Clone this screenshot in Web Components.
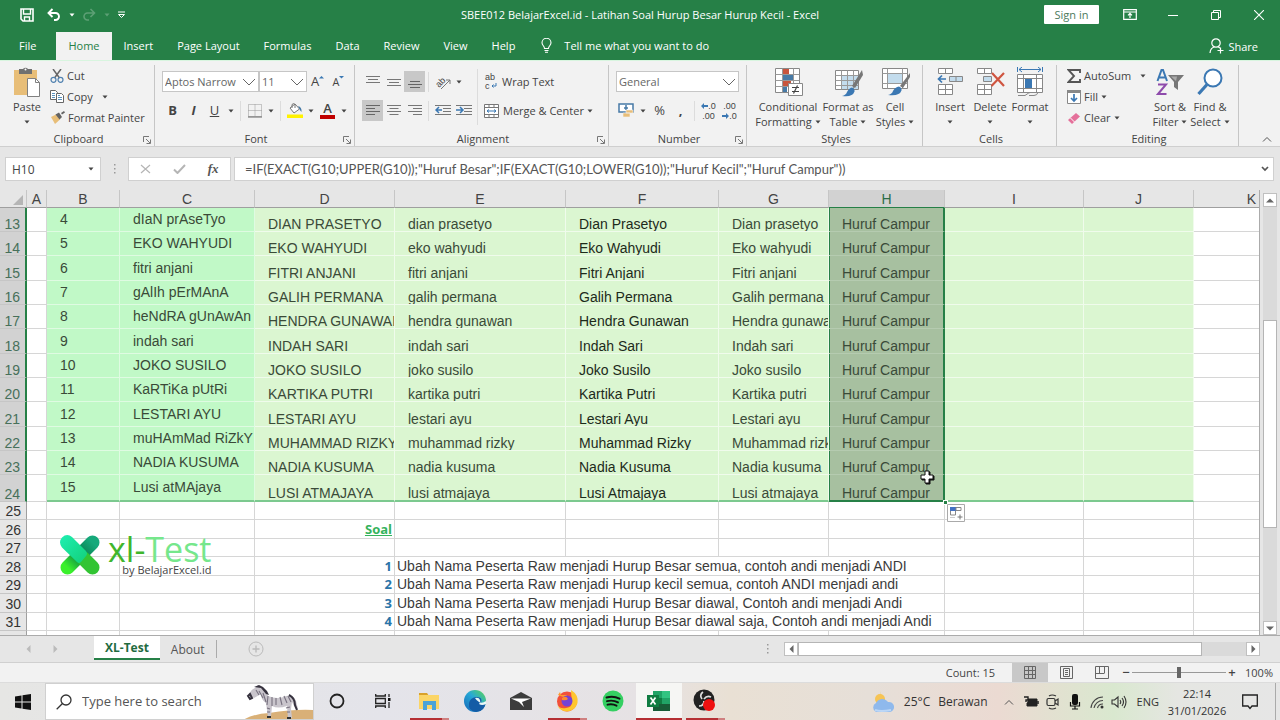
<!DOCTYPE html>
<html lang="en">
<head>
<meta charset="utf-8">
<title>SBEE012 BelajarExcel.id - Excel</title>
<style>
  html, body { height:100%; margin:0; }
  body {
    display:flex; flex-direction:column; overflow:hidden;
    font:11px/15px "Open Sans", "Noto Sans", sans-serif; color:#444; background:#e6e6e6;
  }
  sheet-grid { flex:1; min-height:0; }
</style>
</head>
<body>
  <title-bar></title-bar>
  <ribbon-tabs></ribbon-tabs>
  <ribbon-bar></ribbon-bar>
  <formula-bar></formula-bar>
  <sheet-grid></sheet-grid>
  <sheet-tabs></sheet-tabs>
  <status-bar></status-bar>
  <task-bar></task-bar>

<script>
// [width, height, content]
const ICONS = {
  save: [14, 14, '<path d="M1 1h12v12H3l-2-2z" fill="none" stroke="#fff" stroke-width="1.6"/><path d="M3.500 1v5h7V1M4.500 13V9h5v4" fill="none" stroke="#fff" stroke-width="1.400"/>'],
  undo: [14, 13, '<path d="M5.500 1 1.500 5l4 4M2 5h6.500a3.500 3.500 0 0 1 0 7H7" fill="none" stroke="#fff" stroke-width="1.900"/>'],
  redo: [14, 13, '<path d="M8.500 1l4 4-4 4M12 5H5.500a3.500 3.500 0 0 0 0 7H7" fill="none" stroke="#5d9f75" stroke-width="1.600"/>'],
  customize: [9, 8, '<path d="M1 1h7" stroke="#fff"/><path d="M1.500 3.500h6l-3 3z" fill="none" stroke="#fff"/>'],
  caret: [6, 4, '<path d="M.5.500h5L3 3.500z" fill="currentColor"/>'],
  chevron: [14, 8, '<path d="M1 1l6 6 6-6" fill="none" stroke="#666"/>'],
  display: [14, 11, '<path d="M.7.700h12.600v9.600H.7zM.7 3h12.600M7 9V4.500M5 6.300l2-2 2 2" fill="none" stroke="#fff" stroke-width="1.200"/>'],
  minimize: [10, 10, '<path d="M0 5.500h10" stroke="#fff"/>'],
  restore: [10, 10, '<path d="M.5 2.500h7v7h-7zM2.500 2.500v-2h7v7h-2" fill="none" stroke="#fff"/>'],
  close: [10, 10, '<path d="M0 0l10 10M10 0L0 10" stroke="#fff" stroke-width="1.100"/>'],
  bulb: [11, 15, '<path d="M3.500 10.500C3.500 8 1 7.500 1 4.800a4.500 4.500 0 0 1 9 0c0 2.700-2.500 3.200-2.500 5.700zM3.500 12.500h4M4 14.300h3" fill="none" stroke="#fff" stroke-width="1.100"/>'],
  person: [15, 16, '<circle cx="7" cy="5" r="4.200" fill="none" stroke="#fff" stroke-width="1.200"/><path d="M1 15c.3-3.500 2-5.500 4.500-6M9 8.800l2 1.200M11.500 9.500v6M8.500 12.500h6" fill="none" stroke="#fff" stroke-width="1.200"/>'],
  paste: [28, 30, '<path d="M1 3h23v25H1z" fill="#e8be78"/><path d="M6 2h4a3 3 0 0 1 5 0h4v5H6z" fill="#707070"/><circle cx="12.500" cy="2.500" r="1" fill="#fff"/><path d="M14.500 11.500h8l4 4v14h-12z" fill="#fff" stroke="#808080"/><path d="M22.500 11.500v4h4" fill="none" stroke="#808080"/>'],
  cut: [14, 14, '<path d="M3 0l6.500 9M11 0L4.500 9" stroke="#666" stroke-width="1.500"/><circle cx="3.500" cy="10.800" r="2.500" fill="none" stroke="#5182b0" stroke-width="1.200"/><circle cx="10.500" cy="10.800" r="2.500" fill="none" stroke="#5182b0" stroke-width="1.200"/>'],
  copy: [14, 13, '<path d="M.5.500h5l2 2v7h-7z" fill="#fff" stroke="#666"/><path d="M6.500 3.500h5l2 2v7h-7z" fill="#fff" stroke="#666"/><path d="M2 3.500h3M2 5.500h3M2 7.500h3M8 7.500h4M8 9.500h4M8 5.500h2" stroke="#5b93bf"/>'],
  painter: [15, 13, '<path d="M1 6l5-2.500 4 5L5 13z" fill="#e8be78"/><path d="M5.500 3.500L9 1.500l3 4.500-2.500 2.500zM11 2l3-2 1 1.500-3 2z" fill="#636363"/>'],
  launcher: [8, 8, '<path d="M.5 6V.500H6M3 3l4 4M7.500 3.500v4h-4" fill="none" stroke="#777"/>'],
  border: [14, 14, '<path d="M.5.500h13v12H.5zM7 .5v12M.5 6.500h13" fill="none" stroke="#999" stroke-dasharray="1 1"/><path d="M0 13h14" stroke="#666"/>'],
  bucket: [16, 15, '<path d="M3 5l5-4 4.500 5L7 10z" fill="#fff" stroke="#777"/><path d="M5 5V1.500q2-2 3 0V5" fill="none" stroke="#777"/><path d="M11 3q4 1 3.500 6-2-2-2.500-4" fill="#477aa6"/><path d="M0 11.500h16v3.500H0z" fill="#fff200"/>'],
  top: [14, 12, '<path d="M0 .5h14M2 3.500h10M0 6.500h14" stroke="#777"/>'],
  middle: [14, 12, '<path d="M0 3.500h14M2 6.500h10M0 9.500h14" stroke="#777"/>'],
  bottom: [14, 12, '<path d="M2 5.500h10M0 8.500h14M2 11.500h10" stroke="#666"/>'],
  left: [14, 12, '<path d="M0 .5h14M0 3.500h9M0 6.500h14M0 9.500h9" stroke="#666"/>'],
  center: [14, 12, '<path d="M0 .5h14M2.500 3.500h9M0 6.500h14M2.500 9.500h9" stroke="#777"/>'],
  right: [14, 12, '<path d="M0 .5h14M5 3.500h9M0 6.500h14M5 9.500h9" stroke="#777"/>'],
  outdent: [16, 12, '<path d="M0 .5h16M8 3.500h8M8 6.500h8M0 9.500h16" stroke="#777"/><path d="M4 2L1 5l3 3M1 5h6" fill="none" stroke="#3b78b3" stroke-width="1.500"/>'],
  indent: [16, 12, '<path d="M0 .5h16M8 3.500h8M8 6.500h8M0 9.500h16" stroke="#777"/><path d="M4 2l3 3-3 3M0 5h6" fill="none" stroke="#3b78b3" stroke-width="1.500"/>'],
  merge: [15, 14, '<path d="M.5.500h14v13H.5zM.5 3.500h14M.5 10.500h14M5 .5v3M10 .5v3M5 10.500v3M10 10.500v3" fill="#fff" stroke="#777"/><path d="M3 7h9M5 5.500L3 7l2 1.500M10 5.500L12 7l-2 1.500" fill="none" stroke="#3b78b3"/>'],
  money: [17, 15, '<path d="M1 1h14v8H1z" fill="#fff" stroke="#477aa6" stroke-width="1.500"/><path d="M8 2v5M6 5h4" stroke="#477aa6" stroke-width="1.500"/><path d="M8 7h7v3H8zM5 10h7v4H5z" fill="#e8be78" stroke="#f2f2f2" stroke-width=".6"/>'],
  arrowleft: [7, 6, '<path d="M3 0L0 3l3 3V4h4V2H3z" fill="#3b78b3"/>'],
  arrowright: [7, 6, '<path d="M4 0l3 3-3 3V4H0V2h4z" fill="#3b78b3"/>'],
  conditional: [29, 30, '<path d="M1.500 1.500h24v24h-24z" fill="#fff" stroke="#888"/><path d="M9 2h6v5H9zM9 14h8v5H9z" fill="#c8553d"/><path d="M9 8h10v5H9zM9 20h4v5H9z" fill="#477aa6"/><path d="M1.500 7.500h24M1.500 13.500h24M1.500 19.500h24M8.500 1.500v24M19.500 1.500v24" fill="none" stroke="#999"/><path d="M14.500 16.500h14v12h-14z" fill="#fff" stroke="#888"/><path d="M18 20.500h7M18 24.500h7M23.500 18.500l-4 8" stroke="#444" stroke-width="1.200"/>'],
  tablestyle: [29, 30, '<path d="M1.500 3.500h23v19h-23z" fill="#fff" stroke="#888"/><path d="M8 9h16v13H8z" fill="#c3dced"/><path d="M1.500 8.500h23M1.500 13.500h23M1.500 18.500h23M7.500 3.500v19M13.500 3.500v19M19.500 3.500v19" stroke="#999"/><path d="M28 3L18 19l3 2 8-13z" fill="#777"/><path d="M8 29q4-1 5-4 2-4 5-4.500 3 1 2.500 4-2 6-12.500 4.500z" fill="#3b78b3"/>'],
  cellstyle: [29, 30, '<path d="M1.500 1.500h25v20h-25z" fill="#fff" stroke="#888"/><path d="M1.500 6.500h25M1.500 16.500h25M6.500 1.500v20M21.500 1.500v20" stroke="#999"/><path d="M7 7h14v9H7z" fill="#c3dced"/><path d="M29 6L19 19l3 2 7-11z" fill="#777"/><path d="M7 28q4-1 5-4 2-4 6-4.500 3 1 2.500 4-2 6-13.500 4.500z" fill="#3b78b3"/>'],
  insert: [27, 30, '<path d="M1.500 1.500h14v5h-14zM8.500 1.500v5M1.500 17.500h14v10h-14zM8.500 17.500v10M1.500 22.500h14" fill="#fff" stroke="#888"/><path d="M12.500 9.500h13v5h-13zM19 9.500v5" fill="#c3dced" stroke="#888"/><path d="M5 8.500L1.500 12 5 15.500M2 12h7" fill="none" stroke="#3b78b3" stroke-width="1.700"/>'],
  delete: [29, 30, '<path d="M1.500 1.500h14v5h-14zM8.500 1.500v5M1.500 17.500h14v10h-14zM8.500 17.500v10M1.500 22.500h14" fill="#fff" stroke="#888"/><path d="M7.500 9.500h8v5h-8z" fill="#c3dced" stroke="#888"/><path d="M16 6l12 13M28 6L15.500 19" stroke="#cf5540" stroke-width="2.200"/>'],
  format: [28, 30, '<path d="M3 2.500h22M6 0L3 2.500 6 5M22 0l3 2.500L22 5M1.500 0v5M26.500 0v5" fill="none" stroke="#3b78b3"/><path d="M1.500 7.500h25v18h-25zM1.500 11.500h25M1.500 21.500h25M7.500 7.500v18M20.500 7.500v18" fill="#fff" stroke="#888"/><path d="M9 12h7v9H9z" fill="#3b78b3"/><path d="M2 28.500h7q4-3 5-3M13 28.500h5q3 0 4-3" fill="none" stroke="#888"/>'],
  sigma: [14, 14, '<path d="M13 4V1H1.500L7 7l-5.500 6H13v-3" fill="none" stroke="#555" stroke-width="1.900"/>'],
  fill: [14, 14, '<path d="M.5.500h13v13H.5z" fill="#fff" stroke="#888"/><path d="M0 0h14v3H0z" fill="#888"/><path d="M7 4v7M4 8l3 3 3-3" fill="none" stroke="#3b78b3" stroke-width="1.700"/>'],
  eraser: [14, 14, '<path d="M1 9l8-7 4 3.500L5 13z" fill="#e4709a"/><path d="M3.500 7l4 4" stroke="#fff"/>'],
  sort: [28, 30, '<path d="M1.500 14L5.500 3h1.500l4 11M3 10.500h6.500" fill="none" stroke="#3b78b3" stroke-width="2"/><path d="M2 17.500h8L2 27h8.500" fill="none" stroke="#8e4bab" stroke-width="2"/><path d="M12 8h16l-6 7v8l-4-3v-5z" fill="#777"/><path d="M15 9.500h6L20 14z" fill="#aaa"/>'],
  find: [28, 30, '<circle cx="17" cy="11" r="8.500" fill="#fff" stroke="#3b78b3" stroke-width="2"/><path d="M11 17.500L2.500 27" stroke="#3b78b3" stroke-width="3.200"/>'],
  collapse: [10, 6, '<path d="M1 5.500L5 1.500l4 4" fill="none" stroke="#555"/>'],
  cancel: [11, 10, '<path d="M1 1l9 8M10 1L1 9" stroke="#b5b5b5" stroke-width="1.200"/>'],
  accept: [13, 10, '<path d="M1 5.500l3.500 3.500L12 1" fill="none" stroke="#b5b5b5" stroke-width="2"/>'],
  dots: [3, 12, '<path d="M1 1h1.500v1.500H1zM1 5h1.500v1.500H1zM1 9h1.500v1.500H1z" fill="#999"/>'],
  expand: [8, 6, '<path d="M1 1l3 3 3-3" fill="none" stroke="#555" stroke-width="1.700"/>'],
  plus: [16, 16, '<circle cx="8" cy="8" r="7" fill="none" stroke="#bbb"/><path d="M8 4.500v7M4.500 8h7" stroke="#bbb" stroke-width="1.400"/>'],
  prev: [5, 8, '<path d="M4.500 0v8L.5 4z" fill="currentColor"/>'],
  next: [5, 8, '<path d="M.5 0v8l4-4z" fill="currentColor"/>'],
  up: [8, 5, '<path d="M0 4.500h8L4 .5z" fill="currentColor"/>'],
  down: [8, 5, '<path d="M0 .5h8l-4 4z" fill="currentColor"/>'],
  normal: [14, 13, '<path d="M1.500.500h11v12h-11zM1.500 4.500h11M1.500 8.500h11M5.500.500v12M9.500.500v12" fill="none" stroke="#666"/>'],
  pagelayout: [13, 13, '<path d="M.5.500h12v12H.5zM3.500 2.500h6v8h-6zM5 4.500h3M5 6.500h3M5 8.500h3" fill="none" stroke="#666"/>'],
  pagebreak: [14, 13, '<path d="M.5 12.500V.500h13v12h-13M4.500 0v7M9.500 0v7M0 7.500h9.500" fill="none" stroke="#666"/>'],
  logo: [42, 42, '<defs><linearGradient id="a" x1="0" y1="0" x2="1" y2="1"><stop stop-color="#1fefb2"/><stop offset="1" stop-color="#12cf79"/></linearGradient><linearGradient id="b" x1="1" y1="0" x2="0" y2="1"><stop stop-color="#16a97b"/><stop offset=".5" stop-color="#087c4b"/><stop offset="1" stop-color="#3af02c"/></linearGradient></defs><path d="M33.500 8.500l-25 25" stroke="url(#b)" stroke-width="14" stroke-linecap="round"/><path d="M24 24l9.500 9.500" stroke="#32c433" stroke-width="14" stroke-linecap="round"/><path d="M3 3.500Q8-1 13 3l14 14q2 3 0 5l-5 6q-2 2-4 0L3 13.500Q-1 8 3 3.500z" fill="url(#a)"/>'],
  fillopts: [18, 18, '<path d="M.5.500h17v17H.5z" fill="#fff" stroke="#aaa"/><path d="M3 3h6v4H3z" fill="#4472c4"/><path d="M9 3.500h5v3H9zM3.500 7v4h5V7" fill="none" stroke="#888"/><path d="M13 10.500v5M10.500 13h5" stroke="#777"/><path d="M3 13.500h5" stroke="#ccc"/>'],
  cursor: [15, 15, '<path d="M6 2h4v4h4v4h-4v4H6v-4H2V6h4z" fill="#111" stroke="#111"/><path d="M5 1h4v4h4v4H9v4H5V9H1V5h4z" fill="#fff" stroke="#111"/>'],
  windows: [16, 16, '<path d="M0 2.500l6.500-1V7.500H0zM7.500 1.300L16 0v7.500H7.500zM0 8.500h6.500v6L0 13.500zM7.500 8.500H16V16l-8.500-1.300z" fill="#111"/>'],
  search: [16, 16, '<circle cx="10" cy="6" r="5" fill="none" stroke="#333" stroke-width="1.300"/><path d="M6.500 9.500L.7 15.300" stroke="#333" stroke-width="1.300"/>'],
  zebra: [70, 36, '<path d="M0 36q10-6 26-7 26-4 44-3v10z" fill="#d9b077"/><path d="M6 12q1-6 6-8l3-3 2 2q6 2 8 9 10 4 18 0 8-1 10 5l2 8-2 1-4-8-1 7 1 9h-4l-1-12q-9 3-15 0l-1 11h-3l-2-14q-5-3-5-9l-7 4z" fill="#c9c5cc"/><path d="M11 3l5-2 4 2 4 4 2 4-3-1-5-6z" fill="#36323e"/><path d="M5 12l2-2 2 4-2 1zM46 11q6 3 6 10l2 5" fill="none" stroke="#36323e" stroke-width="2"/><path d="M13 6l3 5M16 7l4 7M20 9l3 9M25 12l-1 9M29 13v9M33 14v7M37 13l2 8M41 12l3 7M45 12l3 6M24 24l3 1M24 28h3M43 24l4-1M44 28h3" stroke="#77717f" stroke-width="1.100"/><path d="M24 33h4M44 34h4" stroke="#333" stroke-width="2"/>'],
  cortana: [16, 16, '<circle cx="8" cy="8" r="6.500" fill="none" stroke="#222" stroke-width="1.800"/>'],
  taskview: [16, 14, '<path d="M.7 0v2h9.600V0M.7 14v-2h9.600v2M.7 4.500h9.600v5H.7zM14 0v3M14 8v6" fill="none" stroke="#222" stroke-width="1.300"/><path d="M13 4h2.500v3H13z" fill="#111"/>'],
  folder: [22, 20, '<path d="M1 2h8l2 3H1z" fill="#d9a12b"/><path d="M1 4h20v14H1z" fill="#fbd567"/><path d="M5 10h13v9h-4v-5H9v5H5z" fill="#4ba3d8"/>'],
  edge: [24, 24, '<defs><linearGradient id="e" x1="0" y1="1" x2="1" y2="0"><stop stop-color="#1565b8"/><stop offset=".55" stop-color="#27a9d6"/><stop offset="1" stop-color="#5fd64c"/></linearGradient></defs><circle cx="12" cy="12" r="11" fill="url(#e)"/><path d="M10 12q0-4 4-4 6 0 4 6 3 1 5-2-1 11-10 11Q5 22 6 14q1-5 7-6-3 2-3 4z" fill="#145ca6"/><path d="M12 9q4-1 5 2 1 2-1 4 3 2 7 0v-3q-4 3-7 1-3-2-4-4z" fill="#e9f7f7"/>'],
  mail: [24, 20, '<path d="M1 7l11-6 11 6v12H1z" fill="#3c3c3c"/><path d="M2 7.500h20L13 11l2 5-5-5z" fill="#fff"/>'],
  firefox: [24, 24, '<circle cx="12" cy="12.500" r="10" fill="#f2503a"/><path d="M16 1q8 5 6.500 13Q20 22 12 22.500 5 22 2 16q3 4 9 3 7-1 6-8-1-5-1-10z" fill="#ffc52e"/><path d="M3 6l2-3 1 3h6l-1 3z" fill="#ff9a2e"/><circle cx="12" cy="12" r="5.500" fill="#7542d5"/><path d="M7 9q4-3 6 1-2 2-6 1z" fill="#ff8a2e"/>'],
  spotify: [22, 22, '<circle cx="11" cy="11" r="10.500" fill="#35cf62"/><path d="M4.500 7.500q7-2 13 1.200M5 11.200q6-1.500 11 1.200M5.500 14.700q5-1.200 9 1" fill="none" stroke="#111" stroke-width="1.900" stroke-linecap="round"/>'],
  excel: [24, 22, '<path d="M6 1h17v20H6z" fill="#21a366"/><path d="M15 1h8v7h-8z" fill="#33c481"/><path d="M6 8h9v6H6z" fill="#107c41"/><path d="M6 14h17v7H6z" fill="#185c37"/><path d="M15 8h8v6h-8z" fill="#21a366"/><path d="M0 5h12v12H0z" fill="#107c41"/><path d="M3.500 7.500l5 7M8.500 7.500l-5 7" stroke="#fff" stroke-width="1.700"/>'],
  obs: [24, 24, '<circle cx="11" cy="11" r="10.500" fill="#222"/><path d="M10 3q-4 3-1 7M18 8q-4-2-7 2M6 17q5 0 5-5" fill="none" stroke="#ddd" stroke-width="1.700"/><circle cx="16" cy="16" r="6" fill="#ef1010"/>'],
  weather: [26, 24, '<path d="M10 1q0 6 5 8-3 5-9 3 5-4 4-11z" fill="#f6b52e"/><circle cx="10" cy="9" r="5" fill="#f6c455"/><path d="M6 22a5 5 0 0 1 0-9 7 7 0 0 1 12-1 5 5 0 0 1 2 10z" fill="#8fb9ec"/><path d="M5 20q6 2 16 0" stroke="#bcd7f6" stroke-width="2" fill="none"/>'],
  battery: [16, 12, '<path d="M5 3h9v7H4V7" fill="#222" stroke="#222"/><path d="M15 5v3" stroke="#222" stroke-width="1.500"/><path d="M1 1h4v3H3v2" fill="none" stroke="#222" stroke-width="1.400"/>'],
  meet: [14, 16, '<rect x="1" y="4.500" width="8" height="7" rx="1.500" fill="none" stroke="#333" stroke-width="1.200"/><path d="M9 7l3-2v6l-3-2M3 2q3-2 7 0M3 14q3 2 7 0" fill="none" stroke="#333" stroke-width="1.200"/>'],
  mic: [12, 16, '<rect x="3" y="0" width="6" height="11" rx="2" fill="#111"/><path d="M1.500 8v4h9V8M6 12v3M3 15h6" fill="none" stroke="#111" stroke-width="1.200"/>'],
  wifi: [14, 14, '<path d="M1 13A12 12 0 0 1 13 2M4 13a9 9 0 0 1 9-7.500M7.500 13A5.500 5.500 0 0 1 13 9" fill="none" stroke="#444" stroke-width="1.100"/><circle cx="12" cy="12" r="1.500" fill="#333"/>'],
  sound: [16, 14, '<path d="M1 5h2.500L7 2v10L3.500 9H1zM9 5q1.500 2 0 4M11 3q3 4 0 8M13 1q4 6 0 12" fill="none" stroke="#333" stroke-width="1.100"/>'],
  notice: [16, 16, '<path d="M.7 1h14.600v11H10l-2 2.500L6 12H.7z" fill="none" stroke="#222" stroke-width="1.300"/>']
};

const icon = name => {
  const [w, h, body] = ICONS[name];
  return `<svg width="${w}" height="${h}" viewBox="0 0 ${w} ${h}" aria-hidden="true">${body}</svg>`;
};

const BASE = `
  :host, *{ box-sizing:border-box; }
  svg{ display:block; flex:none; }
  button, input, select{
    font:inherit; color:inherit; margin:0; padding:0; border:0; background:none; border-radius:0;
  }
  button{ display:flex; align-items:center; justify-content:center; white-space:nowrap; }
`;

function define(tag, render, ready) {
  customElements.define(tag, class extends HTMLElement {
    constructor() {
      super();
      this.attachShadow({ mode: 'open' });
    }
    connectedCallback() {
      this.shadowRoot.innerHTML = `<style>${BASE}</style>` + render(this);
      if (ready) ready(this.shadowRoot);
    }
  });
}

define('title-bar', () => `
  <style>
    :host{ display:grid; grid-template-columns:1fr auto 1fr; align-items:center; height:32px; padding-bottom:3px; background:#268047; color:#fff; }
    .quick{ display:flex; align-items:center; padding-left:20px; gap:7px; }
    .quick button{ height:20px; gap:8px; }
    .quick .redo{ color:#5d9f75; }
    .quick .save{ margin-right:6px; }
    .window{ display:flex; justify-content:flex-end; align-items:center; }
    .window button{ width:43px; height:20px; }
    .window .sign{ width:55px; height:19px; background:#fff; color:#4c7a5d; margin-right:9px; border-radius:1px; }
  </style>
  <div class="quick">
    <button class="save" aria-label="Save">${icon('save')}</button>
    <button aria-label="Undo">${icon('undo')}${icon('caret')}</button>
    <button class="redo" aria-label="Redo">${icon('redo')}${icon('caret')}</button>
    <button aria-label="Customize Quick Access Toolbar">${icon('customize')}</button>
  </div>
  <div>SBEE012 BelajarExcel.id - Latihan Soal Hurup Besar Hurup Kecil - Excel</div>
  <div class="window">
    <button class="sign">Sign in</button>
    <button aria-label="Ribbon display options">${icon('display')}</button>
    <button aria-label="Minimize">${icon('minimize')}</button>
    <button aria-label="Restore">${icon('restore')}</button>
    <button aria-label="Close">${icon('close')}</button>
  </div>
`);

define('ribbon-tabs', () => `
  <style>
    :host{ display:flex; height:28px; background:#268047; color:#fff; padding:0 22px 0 7px; }
    button{ padding:0 12px 1px; }
    .file{ margin-right:8px; }
    .on{ background:#f2f2f2; color:#268047; }
    .tell{ gap:12px; padding-left:14px; }
    .share{ margin-left:auto; gap:4px; padding:0; }
  </style>
  <button class="file">File</button>
  <button class="on">Home</button>
  ${['Insert', 'Page Layout', 'Formulas', 'Data', 'Review', 'View', 'Help'].map(t => `<button>${t}</button>`).join('')}
  <button class="tell">${icon('bulb')}Tell me what you want to do</button>
  <button class="share">${icon('person')}Share</button>
`);

define('ribbon-group', el => `
  <style>
    :host{ display:flex; flex-direction:column; border-right:1px solid #c6c6c6; margin-top:4px; padding:0 4px 0 7px; }
    .body{ display:flex; height:64px; }
    footer{ position:relative; margin-top:3px; line-height:14px; text-align:center; }
    footer button{ position:absolute; right:-1px; top:4px; }
  </style>
  <div class="body"><slot></slot></div>
  <footer>${el.getAttribute('label')}${el.hasAttribute('launcher') ? `<button aria-label="${el.getAttribute('label')} settings">${icon('launcher')}</button>` : ''}</footer>
`);

// Tall button: picture over one or two lines of text.
define('big-button', el => {
  const second = el.getAttribute('second');
  return `
  <style>
    :host{ display:block; }
    button{ flex-direction:column; width:100%; justify-content:flex-start; }
    .pic{ display:flex; align-items:center; height:34px; }
    .line{ display:flex; align-items:center; justify-content:center; height:15px; gap:3px; }
  </style>
  <button>
    <span class="pic">${icon(el.getAttribute('icon'))}</span>
    <span class="line"><slot></slot></span>
    <span class="line">${second ? `<span>${second}</span>` : ''}${icon('caret')}</span>
  </button>`;
});

define('small-button', el => `
  <style>
    :host{ display:block; }
    button{ height:21px; gap:3px; }
    .menu{ margin-left:var(--menu-gap, 0); }
  </style>
  <button>${icon(el.getAttribute('icon'))}<slot></slot>${el.hasAttribute('menu') ? `<span class="menu">${icon('caret')}</span>` : ''}</button>
`);

define('combo-box', el => `
  <style>
    :host{ display:grid; align-items:center; background:#fff; border:1px solid #c6c6c6; height:21px; }
    select{ grid-area:1/1; appearance:none; width:100%; padding-left:2px; color:#666; }
    svg{ grid-area:1/1; justify-self:end; margin-right:2px; pointer-events:none; }
  </style>
  <select aria-label="${el.getAttribute('label')}"><option>${el.getAttribute('value')}</option></select>${icon('chevron')}
`);

define('ribbon-bar', () => `
  <style>
    :host{ display:flex; background:#f2f2f2; border-top:1px solid #d8f5df; border-bottom:1px solid #cfcfcf; height:87px; }
    .clip{ flex:0 1 155px; } .font{ flex:0 1 200px; } .align{ flex:0 1 254px; }
    .num{ flex:0 1 138px; } .styles{ flex:0 1 176px; } .cells{ flex:0 1 134px; } .edit{ flex:0 1 182px; }
    .stack{ display:flex; flex-direction:column; }
    .clip .stack{ padding-left:3px; }
    .rows{ display:flex; flex-direction:column; gap:8px; padding-top:6px; }
    .row{ display:flex; align-items:center; height:21px; }
    .t{ width:21px; height:21px; font-size:13px; }
    .c{ width:12px; height:21px; }
    .on{ background:#c8c8c8; }
    .sep{ width:1px; height:20px; margin:0 3px; background:#dcdcdc; }
    .tall{ width:1px; margin:4px 3px 0; background:#dcdcdc; height:56px; }
    .wide{ gap:4px; padding-left:3px; height:21px; }
    .tile{ width:40px; }
    .name{ width:97px; } .size{ width:48px; }
    .fmt{ width:123px; }
    .color{ flex-direction:column; font-weight:600; line-height:13px; }
    .color::after{ content:""; width:15px; height:4px; background:#c00000; }
    .tiny{ flex-direction:column; font:9px/10px "Liberation Sans", sans-serif; }
    .tiny span{ display:flex; align-items:center; }
    text{ font:9px "Liberation Sans", sans-serif; fill:#444; }
    .collapse{ margin:auto 8px 4px auto; }
    .auto{ --menu-gap:6px; }
  </style>
  <ribbon-group class="clip" label="Clipboard" launcher>
    <big-button class="tile" icon="paste">Paste</big-button>
    <div class="stack">
      <small-button icon="cut">Cut</small-button>
      <small-button icon="copy" class="auto" menu>Copy</small-button>
      <small-button icon="painter">Format Painter</small-button>
    </div>
  </ribbon-group>
  <ribbon-group class="font" label="Font" launcher>
    <div class="rows">
      <div class="row">
        <combo-box class="name" label="Font" value="Aptos Narrow"></combo-box>
        <combo-box class="size" label="Font size" value="11"></combo-box>
        <button class="t" aria-label="Increase font size">A<svg width="5" height="14"><path d="M0 3.500L2.500 1 5 3.500z" fill="#3b78b3"/></svg></button>
        <button class="t" aria-label="Decrease font size"><small>A</small><svg width="5" height="14"><path d="M0 1h5L2.500 3.500z" fill="#3b78b3"/></svg></button>
      </div>
      <div class="row">
        <button class="t"><b>B</b></button>
        <button class="t"><i><b>I</b></i></button>
        <button class="t"><u>U</u></button>
        <button class="c" aria-label="Underline options">${icon('caret')}</button>
        <span class="sep"></span>
        <button class="t" aria-label="Borders">${icon('border')}</button>
        <button class="c" aria-label="Border options">${icon('caret')}</button>
        <span class="sep"></span>
        <button class="t" aria-label="Fill color">${icon('bucket')}</button>
        <button class="c" aria-label="Fill color options">${icon('caret')}</button>
        <button class="t color" aria-label="Font color">A</button>
        <button class="c" aria-label="Font color options">${icon('caret')}</button>
      </div>
    </div>
  </ribbon-group>
  <ribbon-group class="align" label="Alignment" launcher>
    <div class="rows">
      <div class="row">
        <button class="t" aria-label="Top align">${icon('top')}</button>
        <button class="t" aria-label="Middle align">${icon('middle')}</button>
        <button class="t on" aria-label="Bottom align">${icon('bottom')}</button>
        <span class="sep"></span>
        <button class="t" aria-label="Orientation"><svg width="18" height="18" viewBox="0 0 18 18"><text x="2" y="12" transform="rotate(-45 7 10)">ab</text><path d="M7 16l9-9M16 11V7h-4" fill="none" stroke="#777"/></svg></button>
        <button class="c" aria-label="Orientation options">${icon('caret')}</button>
      </div>
      <div class="row">
        <button class="t on" aria-label="Align left">${icon('left')}</button>
        <button class="t" aria-label="Center">${icon('center')}</button>
        <button class="t" aria-label="Align right">${icon('right')}</button>
        <span class="sep"></span>
        <button class="t" aria-label="Decrease indent">${icon('outdent')}</button>
        <button class="t" aria-label="Increase indent">${icon('indent')}</button>
      </div>
    </div>
    <span class="tall"></span>
    <div class="rows">
      <div class="row"><button class="wide"><svg width="14" height="21" viewBox="0 0 14 21"><text x="1" y="9">ab</text><text x="1" y="18">c</text><path d="M12 12v3H8M9.500 13.500L8 15l1.500 1.500" fill="none" stroke="#3b78b3"/></svg>Wrap Text</button></div>
      <div class="row"><button class="wide">${icon('merge')}Merge &amp; Center</button><button class="c" aria-label="Merge options">${icon('caret')}</button></div>
    </div>
  </ribbon-group>
  <ribbon-group class="num" label="Number" launcher>
    <div class="rows">
      <combo-box class="fmt" label="Number format" value="General"></combo-box>
      <div class="row">
        <button class="t" aria-label="Accounting format">${icon('money')}</button>
        <button class="c" aria-label="Accounting options">${icon('caret')}</button>
        <button class="t">%</button>
        <button class="t"><b>,</b></button>
        <span class="sep"></span>
        <button class="t tiny" aria-label="Increase decimal"><span>${icon('arrowleft')}.0</span><span>.00</span></button>
        <button class="t tiny" aria-label="Decrease decimal"><span>.00</span><span>${icon('arrowright')}.0</span></button>
      </div>
    </div>
  </ribbon-group>
  <ribbon-group class="styles" label="Styles">
    <big-button style="width:68px" icon="conditional" second="Formatting">Conditional</big-button>
    <big-button style="width:52px" icon="tablestyle" second="Table">Format as</big-button>
    <big-button style="width:42px" icon="cellstyle" second="Styles">Cell</big-button>
  </ribbon-group>
  <ribbon-group class="cells" label="Cells">
    <big-button class="tile" icon="insert">Insert</big-button>
    <big-button class="tile" icon="delete">Delete</big-button>
    <big-button class="tile" icon="format">Format</big-button>
  </ribbon-group>
  <ribbon-group class="edit" label="Editing">
    <div class="stack" style="width:86px; padding-left:3px">
      <small-button class="auto" icon="sigma" menu>AutoSum</small-button>
      <small-button icon="fill" menu>Fill</small-button>
      <small-button icon="eraser" menu>Clear</small-button>
    </div>
    <big-button class="tile" icon="sort" second="Filter">Sort &amp;</big-button>
    <big-button class="tile" icon="find" second="Select">Find &amp;</big-button>
  </ribbon-group>
  <button class="collapse" aria-label="Collapse the ribbon">${icon('collapse')}</button>
`);

define('formula-bar', () => `
  <style>
    :host{ display:flex; align-items:center; padding:10px 6px 9px 5px; font-size:12px; }
    .box{ display:flex; align-items:center; height:24px; background:#fff; border:1px solid #d0d0d0; }
    .name{ width:96px; padding-right:6px; }
    input{ flex:1; min-width:0; height:20px; outline:0; }
    .name input{ padding-left:6px; }
    .dots{ margin:0 12px; }
    .tools{ width:103px; }
    .tools button{ flex:1; height:22px; }
    .formula{ flex:1; margin-left:3px; color:#555; }
    .formula input{ padding-left:10px; font:13px Lato, "Open Sans", sans-serif; }
    .formula button{ width:16px; }
    .fx{ font:italic bold 13px "Liberation Serif", serif; color:#555; }
  </style>
  <div class="box name"><input aria-label="Name box" value="H10">${icon('caret')}</div>
  <span class="dots">${icon('dots')}</span>
  <div class="box tools">
    <button aria-label="Cancel">${icon('cancel')}</button>
    <button aria-label="Enter">${icon('accept')}</button>
    <button class="fx">fx</button>
  </div>
  <div class="box formula">
    <input aria-label="Formula" id="f">
    <button aria-label="Expand formula bar">${icon('expand')}</button>
  </div>
`, root => {
  root.getElementById('f').value = '=IF(EXACT(G10;UPPER(G10));"Huruf Besar";IF(EXACT(G10;LOWER(G10));"Huruf Kecil";"Huruf Campur"))';
});

const NAMES = [
  'dIaN prAseTyo', 'EKO WAHYUDI', 'fitri anjani', 'gAlIh pErMAnA', 'heNdRA gUnAwAn', 'indah sari',
  'JOKO SUSILO', 'KaRTiKa pUtRi', 'LESTARI AYU', 'muHAmMad RiZkY', 'NADIA KUSUMA', 'Lusi atMAjaya'
];
const TASKS = [
  'Ubah Nama Peserta Raw menjadi Hurup Besar semua, contoh andi menjadi ANDI',
  'Ubah Nama Peserta Raw menjadi Hurup kecil semua, contoh ANDI menjadi andi',
  'Ubah Nama Peserta Raw menjadi Hurup Besar diawal, Contoh andi menjadi Andi',
  'Ubah Nama Peserta Raw menjadi Hurup Besar diawal saja, Contoh andi menjadi Andi'
];
const COLS = { A:20, B:73, C:135, D:140, E:171, F:153, G:110, H:116, I:139, J:110, K:116 };

const proper = s => s.toLowerCase().replace(/\b\w/g, c => c.toUpperCase());
const sentence = s => s[0].toUpperCase() + s.slice(1).toLowerCase();

function dataRow(raw, i) {
  return `<tr class="data"><th>${i + 13}</th><td></td><td class="raw">${i + 4}</td><td class="raw">${raw}</td>
    <td>${raw.toUpperCase()}</td><td>${raw.toLowerCase()}</td><td class="dark">${proper(raw)}</td><td>${sentence(raw)}</td>
    <td class="sel">Huruf Campur</td><td></td><td></td><td></td></tr>`;
}

function plainRow(n) {
  const blank = k => '<td></td>'.repeat(k);
  if (n === 26) return `<tr><th>26</th>${blank(3)}<td class="soal"><u>Soal</u></td>${blank(7)}</tr>`;
  if (n >= 28 && n <= 31) {
    return `<tr><th>${n}</th>${blank(3)}<td class="no">${n - 27}</td><td class="task" colspan="4">${TASKS[n - 28]}</td>${blank(3)}</tr>`;
  }
  return `<tr><th>${n > 31 ? '' : n}</th>${blank(11)}</tr>`;
}

define('sheet-grid', () => `
  <style>
    :host{ display:flex; overflow:hidden; border-bottom:1px solid #ababab; }
    .view{ position:relative; flex:1; min-width:0; overflow:hidden; border-right:1px solid #ababab; }
    table{ table-layout:fixed; width:0; border-collapse:separate; border-spacing:0; background:#fff; font:14px/16px "Liberation Sans", sans-serif; }
    th, td{ padding:0; white-space:nowrap; overflow:hidden; font-weight:400; vertical-align:bottom; }
    thead th{ height:18px; background:#e6e6e6; border-right:1px solid #c6c6c6; border-bottom:1px solid #9f9f9f; color:#444; }
    thead .on{ background:#d2d2d2; color:#2c6e49; border-bottom-color:#268047; }
    .corner svg{ margin:4px 3px 2px auto; }
    td{ border-right:1px solid #d6d6d6; border-bottom:1px solid #d6d6d6; text-align:left; }
    tbody th{ background:#e6e6e6; border-right:1px solid #9f9f9f; border-bottom:1px solid #c6c6c6; text-align:right; padding-right:5px; color:#333; }
    tr{ height:19px; }
    tr:nth-child(odd){ height:18px; }
    .data, .data:nth-child(odd){ height:24px; line-height:13px; }
    .data:nth-child(3n){ height:25px; }
    .data:nth-child(12){ height:27px; }
    .data th{ background:#d2d2d2; color:#47705a; border-right:2px solid #268047; }
    .data td{ background:#dbf6d1; border-color:#f0fbec; padding-left:13px; color:#3a4a38; }
    .data td:nth-child(2), .data td:last-child{ background:#fff; border-color:#d6d6d6; }
    .data .raw{ background:#c1f9c7; border-color:#dffbe2; vertical-align:middle; }
    .data .dark{ color:#1d2a1b; }
    .data .sel{ background:#a7c0a0; border-color:#b5cbb0; border-right:2px solid #268047; box-shadow:inset 1px 0 #268047; }
    .data:nth-child(12) td{ border-bottom:2px solid #7cc98f; }
    .data:nth-child(12) .sel{ border-bottom-color:#268047; }
    .data:nth-child(12) td:nth-child(2), .data:nth-child(12) td:last-child{ border-bottom:1px solid #d6d6d6; }
    .soal, .no{ text-align:right; padding-right:2px; font:bold 13px/17px "Open Sans", sans-serif; color:#35b35c; }
    .no{ color:#2a74a8; }
    .task{ padding-left:2px; line-height:17px; color:#3b3b3b; }
    .logo{ position:absolute; left:59px; top:344px; display:flex; gap:7px; }
    .word{ font-size:34px; line-height:30px; color:#3fb62c; text-align:right; }
    .word em{ font-style:normal; color:#76e78c; }
    .word small{ display:block; font-size:11px; line-height:12px; color:#444; }
    .handle{ position:absolute; left:943px; top:310px; width:5px; height:5px; background:#268047; border:1px solid #fff; }
    .opts{ position:absolute; left:947px; top:314px; }
    .cursor{ position:absolute; left:920px; top:280px; }
    .bar{ display:flex; flex-direction:column; width:14px; margin:3px 3px 0 3px; background:#dadada; }
    .bar button{ height:14px; background:#fff; border:1px solid #c0c0c0; color:#666; }
    .thumb{ flex:0 0 47%; margin-top:113px; background:#fff; border:1px solid #b5b5b5; }
    .bar button:last-child{ margin-top:auto; }
  </style>
  <div class="view">
    <table>
      <colgroup><col style="width:27px">${Object.values(COLS).map(w => `<col style="width:${w}px">`).join('')}</colgroup>
      <thead><tr><th class="corner"><svg width="10" height="10"><path d="M10 0v10H0z" fill="#b5b5b5"/></svg></th>
        ${Object.keys(COLS).map(c => `<th${c === 'H' ? ' class="on"' : ''}>${c}</th>`).join('')}</tr></thead>
      <tbody>
        ${NAMES.map(dataRow).join('')}
        ${[25, 26, 27, 28, 29, 30, 31, 32].map(plainRow).join('')}
      </tbody>
    </table>
    <div class="logo">${icon('logo')}<div class="word">xl-<em>Test</em><small>by BelajarExcel.id</small></div></div>
    <span class="handle"></span>
    <span class="opts">${icon('fillopts')}</span>
    <span class="cursor">${icon('cursor')}</span>
  </div>
  <div class="bar">
    <button aria-label="Scroll up">${icon('up')}</button>
    <div class="thumb"></div>
    <button aria-label="Scroll down">${icon('down')}</button>
  </div>
`);

define('sheet-tabs', () => `
  <style>
    :host{ display:flex; align-items:center; height:26px; padding-right:20px; font-size:12px; color:#555; }
    .nav{ display:flex; gap:22px; width:94px; padding-left:26px; color:#bbb; }
    .tab{ height:24px; padding:0 11px; align-self:flex-start; }
    .on{ background:#fff; color:#1f6b3f; font-weight:700; border-bottom:2px solid #268047; }
    .about{ border-right:1px solid #ababab; height:18px; margin-top:4px; }
    .add{ margin-left:31px; }
    .dots{ margin-left:auto; }
    .bar{ display:flex; flex:0 0 476px; height:14px; margin-left:15px; background:#dadada; }
    .bar button{ width:14px; background:#fff; border:1px solid #c0c0c0; color:#666; }
    .thumb{ flex:0 0 404px; background:#fff; border:1px solid #b5b5b5; }
    .bar button:last-child{ margin-left:auto; }
  </style>
  <div class="nav"><button aria-label="Previous sheet">${icon('prev')}</button><button aria-label="Next sheet">${icon('next')}</button></div>
  <button class="tab on">XL-Test</button>
  <button class="tab about">About</button>
  <button class="add" aria-label="New sheet">${icon('plus')}</button>
  <span class="dots">${icon('dots')}</span>
  <div class="bar">
    <button aria-label="Scroll left">${icon('prev')}</button>
    <div class="thumb"></div>
    <button aria-label="Scroll right">${icon('next')}</button>
  </div>
`);

define('status-bar', () => `
  <style>
    :host{ display:flex; align-items:center; justify-content:flex-end; height:20px; padding-right:7px; background:#f2f2f2; border-top:1px solid #d0d0d0; }
    .view{ width:36px; height:19px; }
    .on{ background:#c8c8c8; }
    .count{ margin-right:17px; }
    .z{ width:12px; font-size:13px; font-weight:600; }
    input{ appearance:none; width:94px; height:15px; background:linear-gradient(#999,#999) center/100% 1px no-repeat; }
    input::-webkit-slider-thumb{ appearance:none; width:4px; height:11px; background:#666; }
    .pct{ margin-left:7px; }
  </style>
  <span class="count">Count: 15</span>
  <button class="view on" aria-label="Normal">${icon('normal')}</button>
  <button class="view" aria-label="Page Layout">${icon('pagelayout')}</button>
  <button class="view" aria-label="Page Break Preview">${icon('pagebreak')}</button>
  <button class="z" aria-label="Zoom out">−</button>
  <input type="range" aria-label="Zoom" min="0" max="100" value="50">
  <button class="z" aria-label="Zoom in">+</button>
  <span class="pct">100%</span>
`);

define('task-bar', () => `
  <style>
    :host{
      display:flex; align-items:stretch; height:38px; font-size:12px; color:#333; border-top:1px solid #dcdcdc;
      background:linear-gradient(90deg, #e6e6e4, #e4e4ea 30%, #e6e2e4 50%, #e9e0d4 57%, #e6dfd8 68%, #ebdad2 78%, #d9e8cf 87%, #e5e6e2 92%, #e6e6e6);
    }
    .start{ width:45px; }
    .find{ display:flex; align-items:center; width:269px; background:#fff; border:1px solid #d0d0d0; padding-left:10px; gap:10px; overflow:hidden; }
    .find input{ flex:1; min-width:0; font-size:13px; outline:0; }
    .find input::placeholder{ color:#555; opacity:1; }
    .app{ width:46px; border-bottom:2px solid transparent; }
    .run{ border-image:linear-gradient(90deg, transparent 12%, #b52f33 12% 76%, #cf8080 76% 90%, transparent 90%) 2; border-top:0; }
    .active{ background:#f6f6f4; border-bottom-color:#b52f33; }
    .tray{ display:flex; align-items:center; margin-left:auto; }
    .weather{ gap:8px; margin-right:10px; }
    .i{ width:22px; }
    .lang{ margin:0 8px 0 7px; font-size:11px; }
    .clock{ width:60px; margin-right:6px; text-align:center; font-size:11px; line-height:17px; }
    .note{ width:34px; margin-right:8px; }
    .show{ width:5px; align-self:stretch; border-left:1px solid #aaa; }
  </style>
  <button class="start" aria-label="Start">${icon('windows')}</button>
  <label class="find">${icon('search')}<input placeholder="Type here to search" aria-label="Search">${icon('zebra')}</label>
  ${[['cortana', ''], ['taskview', ''], ['folder', 'run'], ['edge', ''], ['mail', ''], ['firefox', 'run'], ['spotify', ''], ['excel', 'active'], ['obs', 'run']]
    .map(([name, state]) => `<button class="app ${state}" aria-label="${name}">${icon(name)}</button>`).join('')}
  <div class="tray">
    <button class="weather">${icon('weather')}<span>25°C</span><span>Berawan</span></button>
    <button class="i" aria-label="Hidden icons">${icon('collapse')}</button>
    ${['battery', 'meet', 'mic', 'wifi', 'sound'].map(n => `<button class="i" aria-label="${n}">${icon(n)}</button>`).join('')}
    <span class="lang">ENG</span>
    <div class="clock">22:14<br>31/01/2026</div>
    <button class="note" aria-label="Notifications">${icon('notice')}</button>
    <button class="show" aria-label="Show desktop"></button>
  </div>
`);
</script>
</body>
</html>
